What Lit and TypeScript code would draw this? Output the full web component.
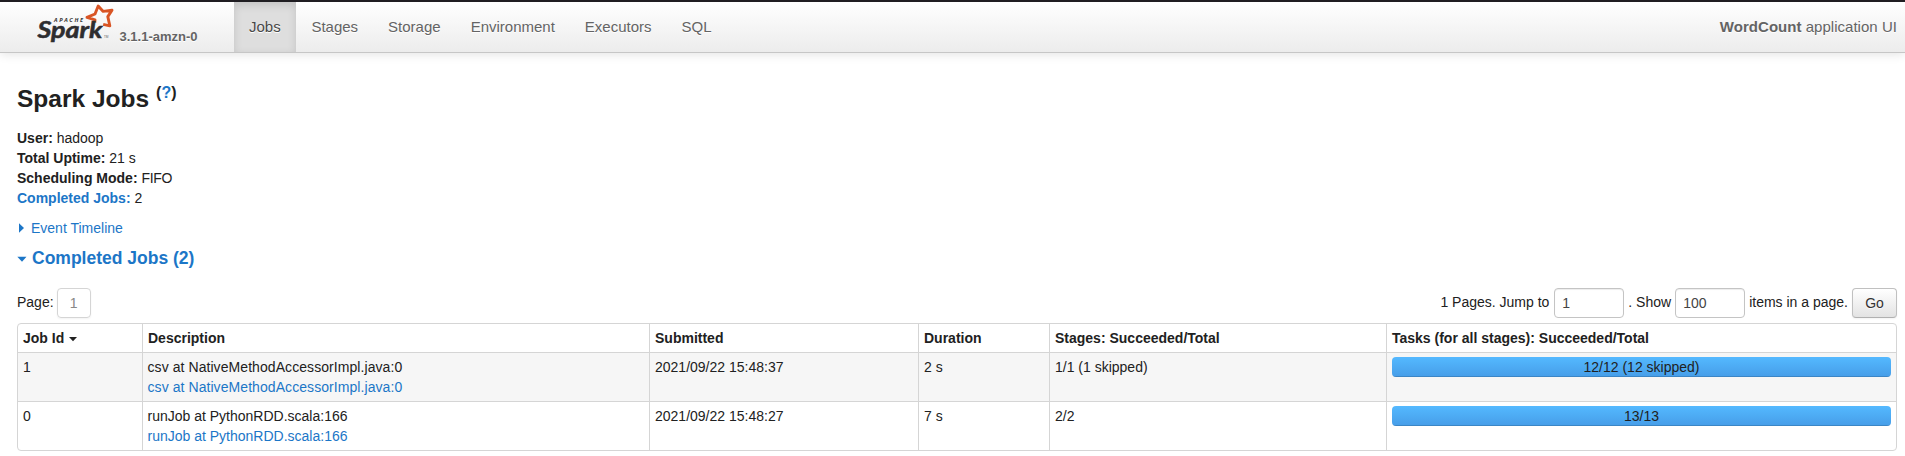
import { LitElement, html, css } from "lit";
import { customElement, state } from "lit/decorators.js";

interface Job {
  id: number;
  description: string;
  submitted: string;
  duration: string;
  stages: string;
  tasks: string;
  progress: number;
}

@customElement("spark-logo")
class SparkLogo extends LitElement {
  static styles = css`
    :host { display: block; width: 78px; height: 42px; text-shadow: none; }
    svg { display: block; }
    .word { font: italic 700 22px "Lato", sans-serif; fill: #2d2d2f; stroke: #2d2d2f; stroke-width: 0.5; }
    .apache { font: italic 700 5.6px "Open Sans", sans-serif; fill: #333; }
    .tm { font: 3px "Open Sans", sans-serif; fill: #555; }
  `;
  render() {
    return html`<svg width="78" height="42" viewBox="0 0 78 42" role="img" aria-label="Apache Spark">
      <path d="M57.8 20.6 L58 17.8 L50 15.4 L58 12 L61.2 4 L66.2 9.4 L75 8.2 L70.8 14.6 L72.8 23.8 L66.2 22.4"
        fill="none" stroke="#d95525" stroke-width="2.9" stroke-linejoin="round" stroke-linecap="butt" />
      <text class="apache" x="17" y="20" textLength="29">APACHE</text>
      <text class="word" x="0.5" y="35.5" textLength="65" lengthAdjust="spacingAndGlyphs">Spark</text>
      <text class="tm" x="67" y="36">TM</text>
    </svg>`;
  }
}

@customElement("app-root")
class AppRoot extends LitElement {
  @state() private jobs: Job[] = [
    { id: 1, description: "csv at NativeMethodAccessorImpl.java:0", submitted: "2021/09/22 15:48:37", duration: "2 s", stages: "1/1 (1 skipped)", tasks: "12/12 (12 skipped)", progress: 100 },
    { id: 0, description: "runJob at PythonRDD.scala:166", submitted: "2021/09/22 15:48:27", duration: "7 s", stages: "2/2", tasks: "13/13", progress: 100 },
  ];

  private tabs = ["Jobs", "Stages", "Storage", "Environment", "Executors", "SQL"];

  static styles = css`
    :host {
      display: block;
      height: 456px;
      overflow: hidden;
      background: #fff;
      color: #212121;
      font: 14px/20px "Liberation Sans", Arial, sans-serif;
    }
    * { box-sizing: border-box; }
    a { color: #1c76c7; text-decoration: none; }
    .navbar {
      display: flex;
      height: 53px;
      border-top: 2px solid #201e22;
      border-bottom: 1px solid #c6c6c6;
      background: linear-gradient(#fff, #ececec);
      box-shadow: 0 1px 10px rgba(0, 0, 0, 0.12);
      padding-right: 8px;
      font-size: 15px;
      color: #646464;
      text-shadow: 0 1px 0 #fff;
    }
    .brand { display: flex; width: 234px; padding-left: 37px; }
    .version { margin: 25px 0 0 4.5px; font-size: 13px; font-weight: bold; white-space: nowrap; }
    .tabs { display: flex; flex: 1; }
    .tab { padding: 14.5px 15px 0; color: #646464; }
    .tab.active { color: #484848; background: #dedede; box-shadow: inset 0 3px 8px rgba(0, 0, 0, 0.125); margin-right: 0.7px; }
    .app { padding-top: 14.5px; letter-spacing: 0.03px; }
    .content { padding: 0 8px 0 17px; }
    .title { display: flex; margin: 26px 0 0; height: 49px; font-size: 24.5px; line-height: 40px; font-weight: bold; }
    .help { margin: -6px 0 0 7px; font-size: 16px; }
    .info { margin: 0; padding: 0; list-style: none; }
    .mode { letter-spacing: -0.35px; }
    .toggle { display: flex; align-items: center; height: 20px; margin-top: 10px; }
    .toggle svg { width: 14px; height: 10px; }
    .heading { margin-top: 10px; height: 20px; font-size: 17.5px; font-weight: bold; }
    .heading svg { width: 15px; }
    .pager { display: flex; height: 30px; margin-top: 20px; }
    .label { padding-top: 4px; white-space: pre; }
    .current, .field, .go {
      height: 30px;
      border: 1px solid #ccc;
      border-radius: 4px;
      padding-top: 4px;
      color: #444;
    }
    .current { width: 34px; margin-left: 3px; text-align: center; color: #888; border-color: #d5d5d5; box-shadow: 0 1px 2px rgba(0, 0, 0, 0.05); }
    .field { width: 70px; padding-left: 7px; border-color: #c4c4c4; box-shadow: inset 0 1px 1px rgba(0, 0, 0, 0.075); }
    .go { width: 45px; text-align: center; color: #333; border-color: #c0c0c0 #c0c0c0 #b0b0b0; background: linear-gradient(#fff, #e3e3e3); box-shadow: 0 1px 2px rgba(0, 0, 0, 0.05); text-shadow: 0 1px 1px rgba(255, 255, 255, 0.75); }
    .right { display: flex; margin-left: auto; }
    .jump { margin-right: 5px; }
    .show { margin: 0 4px; }
    .items { margin: 0 4px; }
    .table { width: 1880px; margin-top: 5px; border: 1px solid #d5d5d5; border-radius: 4px; overflow: hidden; }
    .row { display: grid; grid-template-columns: 124px 507px 269px 131px 337px 1fr; border-top: 1px solid #d5d5d5; height: 49px; }
    .row.head { border-top: 0; height: 28px; font-weight: bold; }
    .row.odd { background: #f6f6f6; }
    .cell { padding: 4px 5px; border-left: 1px solid #d5d5d5; white-space: nowrap; }
    .cell:first-child { border-left: 0; }
    .sort { margin-left: 1px; vertical-align: 1px; }
    .desc { display: flex; flex-direction: column; padding-left: 4.5px; }
    .odd .desc { letter-spacing: 0.07px; }
    .progress { height: 20px; border-radius: 4px; overflow: hidden; display: grid; background: #f7f7f7; }
    .bar, .count { grid-area: 1 / 1; }
    .bar { background: linear-gradient(#54b9ff, #469de8); box-shadow: inset 0 -1px 0 rgba(0, 0, 0, 0.15); }
    .count { text-align: center; z-index: 1; }
  `;

  render() {
    return html`
      <nav class="navbar">
        <div class="brand"><spark-logo></spark-logo><span class="version">3.1.1-amzn-0</span></div>
        <div class="tabs">
          ${this.tabs.map((t, i) => html`<a class="tab ${i === 0 ? "active" : ""}">${t}</a>`)}
        </div>
        <div class="app"><strong>WordCount</strong> application UI</div>
      </nav>
      <main class="content">
        <h3 class="title">Spark Jobs<span class="help">(<a>?</a>)</span></h3>
        <ul class="info">
          <li><strong>User:</strong> hadoop</li>
          <li><strong>Total Uptime:</strong> 21 s</li>
          <li><strong>Scheduling Mode:</strong> <span class="mode">FIFO</span></li>
          <li><a><strong>Completed Jobs:</strong></a> 2</li>
        </ul>
        <a class="toggle"><svg viewBox="0 0 14 10"><path d="M2 0.3V9.7L7 5Z" fill="#1c76c7" /></svg>Event Timeline</a>
        <a class="toggle heading"><svg viewBox="0 0 15 10"><path d="M0.3 3.8H9.5L5 8.7Z" fill="#1c76c7" /></svg>Completed Jobs (2)</a>
        <div class="pager">
          <span class="label">Page:</span><span class="current">1</span>
          <div class="right">
            <span class="label jump">1 Pages. Jump to</span><span class="field">1</span>
            <span class="label show">. Show</span><span class="field">100</span>
            <span class="label items">items in a page.</span><span class="go">Go</span>
          </div>
        </div>
        <div class="table">
          <div class="row head">
            <div class="cell">Job Id <svg class="sort" width="8" height="8" viewBox="0 0 8 8"><path d="M0 3H8L4 7.3Z" fill="#212121" /></svg></div>
            <div class="cell">Description</div>
            <div class="cell">Submitted</div>
            <div class="cell">Duration</div>
            <div class="cell">Stages: Succeeded/Total</div>
            <div class="cell">Tasks (for all stages): Succeeded/Total</div>
          </div>
          ${this.jobs.map((j, i) => html`
            <div class="row ${i % 2 === 0 ? "odd" : ""}">
              <div class="cell">${j.id}</div>
              <div class="cell desc"><span>${j.description}</span><a>${j.description}</a></div>
              <div class="cell">${j.submitted}</div>
              <div class="cell">${j.duration}</div>
              <div class="cell">${j.stages}</div>
              <div class="cell"><div class="progress"><div class="bar" style="width:${j.progress}%"></div><span class="count">${j.tasks}</span></div></div>
            </div>`)}
        </div>
      </main>
    `;
  }
}
